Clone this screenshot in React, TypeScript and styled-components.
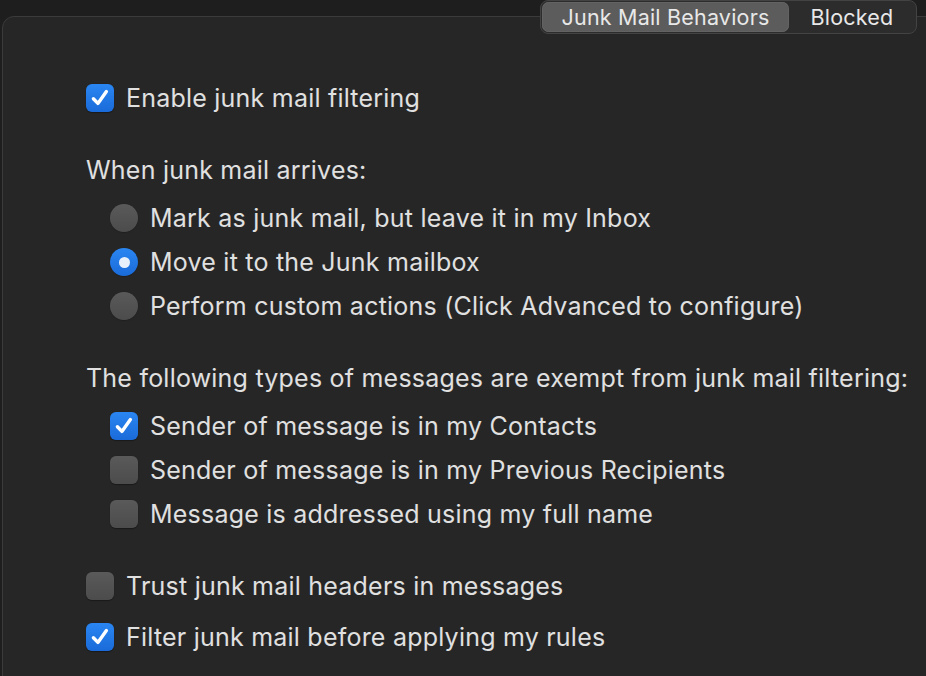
import React from 'react';
import styled, { createGlobalStyle } from 'styled-components';

const GlobalStyle = createGlobalStyle`
  html, body {
    margin: 0;
    padding: 0;
    background: #1e1e1e;
    overflow: hidden;
  }
  body {
    font-family: Inter, "Noto Sans", "Liberation Sans", sans-serif;
    color: #e0e0e0;
    -webkit-font-smoothing: antialiased;
  }
`;

interface Option {
  label: string;
  checked: boolean;
}

const radioOptions: Option[] = [
  { label: 'Mark as junk mail, but leave it in my Inbox', checked: false },
  { label: 'Move it to the Junk mailbox', checked: true },
  { label: 'Perform custom actions (Click Advanced to configure)', checked: false },
];

const exemptOptions: Option[] = [
  { label: 'Sender of message is in my Contacts', checked: true },
  { label: 'Sender of message is in my Previous Recipients', checked: false },
  { label: 'Message is addressed using my full name', checked: false },
];

const CheckMark = () => (
  <svg width="22" height="22" viewBox="0 0 22 22">
    <path
      d="M4.4 11.8 L8.9 16.4 L17.4 4.6"
      fill="none"
      stroke="#ffffff"
      strokeWidth="3.4"
      strokeLinecap="round"
      strokeLinejoin="round"
    />
  </svg>
);

const Checkbox: React.FC<{ checked: boolean }> = ({ checked }) => (
  <Box checked={checked}>{checked && <CheckMark />}</Box>
);

const Radio: React.FC<{ checked: boolean }> = ({ checked }) => (
  <RadioCircle checked={checked}>{checked && <RadioDot />}</RadioCircle>
);

const App: React.FC = () => {
  return (
    <>
      <GlobalStyle />
      <Window>
        <Panel>
          <Tabs>
            <Tab active>Junk Mail Behaviors</Tab>
            <Tab>Blocked</Tab>
          </Tabs>

          <Content>
            <Row>
              <Checkbox checked />
              <Label>Enable junk mail filtering</Label>
            </Row>

            <Heading>When junk mail arrives:</Heading>
            <Group>
              {radioOptions.map(opt => (
                <Row key={opt.label}>
                  <Radio checked={opt.checked} />
                  <Label>{opt.label}</Label>
                </Row>
              ))}
            </Group>

            <Heading>The following types of messages are exempt from junk mail filtering:</Heading>
            <Group>
              {exemptOptions.map(opt => (
                <Row key={opt.label}>
                  <Checkbox checked={opt.checked} />
                  <Label>{opt.label}</Label>
                </Row>
              ))}
            </Group>

            <Footer>
              <Row>
                <Checkbox checked={false} />
                <Label>Trust junk mail headers in messages</Label>
              </Row>
              <Row>
                <Checkbox checked />
                <Label>Filter junk mail before applying my rules</Label>
              </Row>
            </Footer>
          </Content>
        </Panel>
      </Window>
    </>
  );
};

const Window = styled.div`
  width: 926px;
  height: 676px;
  overflow: hidden;
  padding: 16px 0 0 2px;
  box-sizing: border-box;
`;

const Panel = styled.div`
  position: relative;
  height: 700px;
  width: 940px;
  background: #262626;
  border: 1px solid #3b3b3b;
  border-radius: 12px 0 0 0;
  box-sizing: border-box;
`;

const Tabs = styled.div`
  position: absolute;
  top: -17px;
  left: 537px;
  display: flex;
  width: 377px;
  height: 34px;
  padding: 1px;
  box-sizing: border-box;
  background: #2c2c2c;
  border: 1px solid #434343;
  border-radius: 8px;
`;

const Tab = styled.div<{ active?: boolean }>`
  display: flex;
  align-items: center;
  justify-content: center;
  flex: ${p => (p.active ? '0 0 247px' : '1')};
  font-size: 21.5px;
  letter-spacing: 0.2px;
  color: #e8e8e8;
  border-radius: 7px;
  background: ${p => (p.active ? '#5c5c5c' : 'transparent')};
  box-shadow: ${p => (p.active ? '0 0 0 0.5px #6a6a6a inset' : 'none')};
`;

const Content = styled.div`
  display: flex;
  flex-direction: column;
  padding: 67px 0 0 83px;
`;

const Row = styled.div`
  display: flex;
  align-items: center;
  gap: 12px;
  height: 28px;
`;

const Group = styled.div`
  display: flex;
  flex-direction: column;
  gap: 16px;
  padding-left: 24px;
  margin-top: 20px;
`;

const Heading = styled.div`
  font-size: 25px;
  letter-spacing: 0.22px;
  line-height: 28px;
  margin-top: 44px;
  color: #e0e0e0;
  white-space: nowrap;
`;

const Footer = styled.div`
  display: flex;
  flex-direction: column;
  gap: 23px;
  margin-top: 44px;
`;

const Label = styled.span`
  font-size: 25px;
  letter-spacing: 0.22px;
  line-height: 28px;
  color: #e0e0e0;
  white-space: nowrap;
`;

const Box = styled.div<{ checked: boolean }>`
  flex: 0 0 28px;
  width: 28px;
  height: 28px;
  box-sizing: border-box;
  border-radius: 6px;
  display: flex;
  align-items: center;
  justify-content: center;
  background: ${p =>
    p.checked
      ? 'linear-gradient(#2a86f2, #1a6bd9)'
      : 'linear-gradient(#5a5a5a, #4c4c4c)'};
  box-shadow: 0 0.5px 1px rgba(0, 0, 0, 0.35);
`;

const RadioCircle = styled.div<{ checked: boolean }>`
  flex: 0 0 28px;
  width: 28px;
  height: 28px;
  border-radius: 50%;
  display: flex;
  align-items: center;
  justify-content: center;
  background: ${p =>
    p.checked
      ? 'linear-gradient(#2a86f2, #1a6bd9)'
      : 'linear-gradient(#5a5a5a, #4c4c4c)'};
  box-shadow: 0 0.5px 1px rgba(0, 0, 0, 0.35);
`;

const RadioDot = styled.div`
  width: 11px;
  height: 11px;
  border-radius: 50%;
  background: #e8f0fc;
`;

export default App;
